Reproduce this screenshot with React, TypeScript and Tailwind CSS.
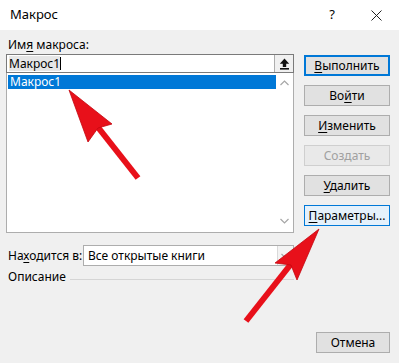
import React from "react";

function Chevron({ dir, className }: { dir: "up" | "down"; className?: string }) {
  return (
    <svg width="9" height="6" viewBox="0 0 9 6" className={className}>
      <path
        d={dir === "up" ? "M0.5 5 L4.5 1 L8.5 5" : "M0.5 1 L4.5 5 L8.5 1"}
        fill="none"
        stroke="#a6a6a6"
        strokeWidth="1.2"
      />
    </svg>
  );
}

type BtnKind = "default" | "normal" | "disabled" | "hover";

function Btn({ kind = "normal", children }: { kind?: BtnKind; children: React.ReactNode }) {
  const styles: Record<BtnKind, string> = {
    default: "bg-[#e1e1e1] border-2 border-[#0078d7] text-black",
    normal: "bg-[#e1e1e1] border border-[#adadad] text-black",
    disabled: "bg-[#e9e9e9] border border-[#cfcfcf] text-[#a0a0a0]",
    hover: "bg-[#e5f1fb] border border-[#0078d7] text-black",
  };
  return (
    <div className={`h-[21px] flex items-center justify-center leading-none ${styles[kind]}`}>
      {children}
    </div>
  );
}

export default function App() {
  return (
    <div className="relative w-[399px] h-[363px] overflow-hidden bg-[#f0f0f0] text-[12px] text-black font-['Noto_Sans',sans-serif]">
      {/* title bar */}
      <div className="h-[30px] bg-white flex items-center pl-[10px] pr-[17px]">
        <span className="text-[13px]">Макрос</span>
        <span className="ml-auto mr-[36px] text-[13px]">?</span>
        <svg width="11" height="11" viewBox="0 0 11 11">
          <path d="M0.5 0.5 L10.5 10.5 M10.5 0.5 L0.5 10.5" stroke="#222" strokeWidth="1" />
        </svg>
      </div>

      <div className="flex pl-[6px]">
        {/* left column */}
        <div className="w-[288px]">
          <div className="h-[24px] pt-[7px] pl-[2px] leading-[16px]">
            Им<span className="underline underline-offset-2">я</span> макроса:
          </div>
          <div className="h-[19px] border border-[#7a7a7a] bg-white flex">
            <div className="flex-1 flex items-center pl-[2px]">
              <span className="bg-[#e6e6e6] leading-[15px]">Макрос1</span>
              <span className="w-px h-[13px] bg-black" />
            </div>
            <div className="w-[19px] h-[17px] bg-[#f0f0f0] border-l border-[#adadad] flex items-center justify-center">
              <svg width="11" height="12" viewBox="0 0 11 12">
                <path d="M5.5 0.5 L0.8 5.8 H3.8 V9 H7.2 V5.8 H10.2 Z" fill="#111" />
                <rect x="1" y="10" width="9" height="1.6" fill="#111" />
              </svg>
            </div>
          </div>
          <div className="h-[160px] border border-t-0 border-[#adadad] bg-white flex">
            <div className="flex-1 pt-[2px] pl-px">
              <div className="h-[14px] bg-[#0078d7] text-white pl-[2px] leading-[14px]">Макрос1</div>
            </div>
            <div className="w-[17px] flex flex-col items-center justify-between pt-[7px] pb-[8px]">
              <Chevron dir="up" />
              <Chevron dir="down" />
            </div>
          </div>
        </div>

        {/* buttons */}
        <div className="ml-[10px] w-[86px] pt-[25px] flex flex-col gap-[9px]">
          <Btn kind="default">
            <span>
              <span className="underline underline-offset-2">В</span>ыполнить
            </span>
          </Btn>
          <Btn>
            <span>
              Во<span className="underline underline-offset-2">й</span>ти
            </span>
          </Btn>
          <Btn>
            <span>
              <span className="underline underline-offset-2">И</span>зменить
            </span>
          </Btn>
          <Btn kind="disabled">Создать</Btn>
          <Btn>
            <span>
              <span className="underline underline-offset-2">У</span>далить
            </span>
          </Btn>
          <Btn kind="hover">
            <span>
              <span className="underline underline-offset-2">П</span>араметры...
            </span>
          </Btn>
        </div>
      </div>

      {/* location row */}
      <div className="mt-[12px] pl-[8px] flex items-center h-[21px]">
        <span className="w-[75px]">
          На<span className="underline underline-offset-2">х</span>одится в:
        </span>
        <div className="w-[211px] h-[21px] border border-[#adadad] bg-white flex items-center">
          <span className="flex-1 pl-[4px]">Все открытые книги</span>
          <div className="w-[16px] h-full bg-[#f3f3f3] border-l border-[#d9d9d9] flex items-center justify-center">
            <Chevron dir="down" />
          </div>
        </div>
      </div>

      {/* description */}
      <div className="mt-[3px] pl-[8px] w-[294px] h-[16px] flex items-center">
        <span>Описание</span>
        <div className="flex-1 h-px bg-[#d5d5d5] ml-[4px] mt-[5px]" />
      </div>

      <div className="mt-[47px] ml-[316px] w-[74px]">
        <Btn>Отмена</Btn>
      </div>

      {/* annotation arrows */}
      <svg className="absolute inset-0 pointer-events-none" width="399" height="363" viewBox="0 0 399 363">
        <g fill="#e8101a" stroke="#c4060f" strokeWidth="0.8" strokeLinejoin="round">
          <line x1="97" y1="126" x2="138" y2="178" stroke="#e8101a" strokeWidth="6" />
          <polygon points="69,90 112,124 98,128 88,142" />
          <line x1="291" y1="264" x2="246" y2="321" stroke="#e8101a" strokeWidth="6" />
          <polygon points="319,229 297,280 291,265 275,263" />
        </g>
      </svg>
    </div>
  );
}
